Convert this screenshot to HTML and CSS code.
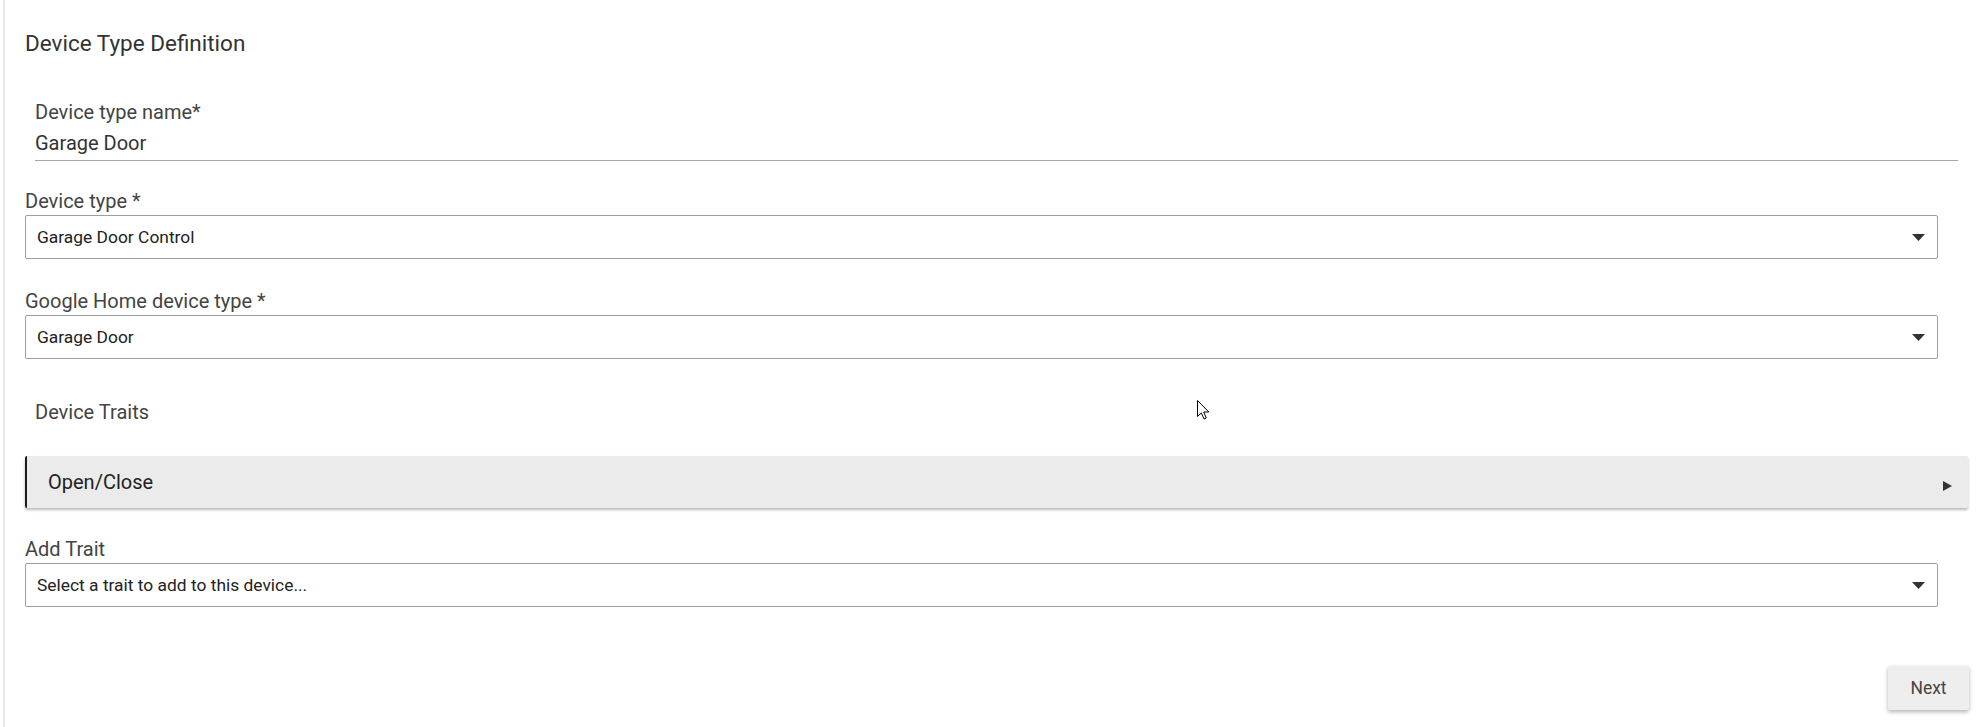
FILE: index.html
```html
<!DOCTYPE html>
<html lang="en">
<head>
<meta charset="utf-8">
<title>Device Type Definition</title>
<link rel="stylesheet" href="styles.css">
</head>
<body>
<div class="page">
  <div class="card">
    <h1 class="title">Device Type Definition</h1>

    <div class="text-field">
      <label class="field-label">Device type name*</label>
      <div class="input-value">Garage Door</div>
    </div>

    <div class="select-field first">
      <label class="field-label">Device type *</label>
      <div class="select">
        <span class="select-text">Garage Door Control</span>
        <svg class="caret" width="13" height="7" viewBox="0 0 13 7"><path d="M0 0 L13 0 L6.5 7 Z" fill="#333"/></svg>
      </div>
    </div>

    <div class="select-field">
      <label class="field-label">Google Home device type *</label>
      <div class="select">
        <span class="select-text">Garage Door</span>
        <svg class="caret" width="13" height="7" viewBox="0 0 13 7"><path d="M0 0 L13 0 L6.5 7 Z" fill="#333"/></svg>
      </div>
    </div>

    <div class="section-label">Device Traits</div>

    <div class="trait-panel">
      <span class="trait-name">Open/Close</span>
      <svg class="trait-arrow" width="9" height="10" viewBox="0 0 9 10"><path d="M0 0 L9 5 L0 10 Z" fill="#333"/></svg>
    </div>

    <div class="select-field add-trait">
      <label class="field-label">Add Trait</label>
      <div class="select">
        <span class="select-text">Select a trait to add to this device...</span>
        <svg class="caret" width="13" height="7" viewBox="0 0 13 7"><path d="M0 0 L13 0 L6.5 7 Z" fill="#333"/></svg>
      </div>
    </div>

    <div class="actions">
      <button class="btn" type="button">Next</button>
    </div>
  </div>

  <svg class="cursor" width="13" height="21" viewBox="0 0 13 21"><path d="M0.5 0.5 L0.5 16.5 L4.3 12.9 L7 19 L9.3 18 L6.7 12 L11.8 12 Z" fill="#fff" stroke="#000" stroke-width="1"/></svg>
</div>
</body>
</html>
```

FILE: styles.css
```css
* {
  box-sizing: border-box;
}

html, body {
  margin: 0;
  padding: 0;
  background: #ffffff;
}

body {
  font-family: Roboto, "Noto Sans", "Liberation Sans", sans-serif;
  color: #333333;
}

.page {
  position: relative;
  min-height: 100vh;
  margin-left: 3px;
  border-left: 2px solid #e8e8e8;
}

.card {
  display: flex;
  flex-direction: column;
  padding: 30px 19px 0 20px;
}

.title {
  margin: 0;
  font-size: 22.5px;
  line-height: 26px;
  font-weight: 400;
  color: #333333;
}

.field-label {
  display: block;
  font-size: 20px;
  line-height: 24px;
  color: #444444;
}

.text-field {
  margin: 44px 10px 0 10px;
}

.input-value {
  margin-top: 6.5px;
  font-size: 20px;
  line-height: 24px;
  padding-bottom: 5px;
  border-bottom: 1px solid #a8a8a8;
  color: #333333;
}

.select-field {
  display: flex;
  flex-direction: column;
  gap: 2px;
  margin-top: 30px;
  margin-right: 30px;
}

.select-field.first {
  margin-top: 28px;
}

.select-field.add-trait {
  margin-top: 29px;
}

.select {
  height: 44px;
  display: flex;
  align-items: center;
  justify-content: space-between;
  padding: 1px 12px 0 11px;
  border: 1px solid #9e9e9e;
  border-radius: 2px;
  background: #ffffff;
}

.select-text {
  font-size: 17.4px;
  line-height: 20px;
  color: #222222;
}

.caret {
  display: block;
}

.section-label {
  margin: 41px 0 0 10px;
  font-size: 20px;
  line-height: 24px;
  color: #444444;
}

.trait-panel {
  margin-top: 32px;
  height: 52px;
  display: flex;
  align-items: center;
  justify-content: space-between;
  padding: 0 16px 0 21px;
  background: #ebebeb;
  border-left: 2px solid #1e1e1e;
  border-radius: 2px;
  box-shadow: 0 2px 3px rgba(0, 0, 0, 0.28);
}

.trait-name {
  font-size: 20px;
  line-height: 24px;
  color: #222222;
}

.trait-arrow {
  display: block;
  margin-top: 8px;
}

.actions {
  display: flex;
  justify-content: flex-end;
  margin-top: 59px;
  margin-right: -1px;
}

.btn {
  width: 81px;
  height: 44px;
  padding: 1px 0 0 0;
  border: none;
  border-radius: 2px;
  background: #eeeeee;
  font-family: Roboto, "Noto Sans", "Liberation Sans", sans-serif;
  font-size: 17.5px;
  line-height: 20px;
  color: #444444;
  box-shadow: 0 2px 4px rgba(0, 0, 0, 0.3);
}

.cursor {
  position: absolute;
  left: 1192px;
  top: 400px;
}
```
